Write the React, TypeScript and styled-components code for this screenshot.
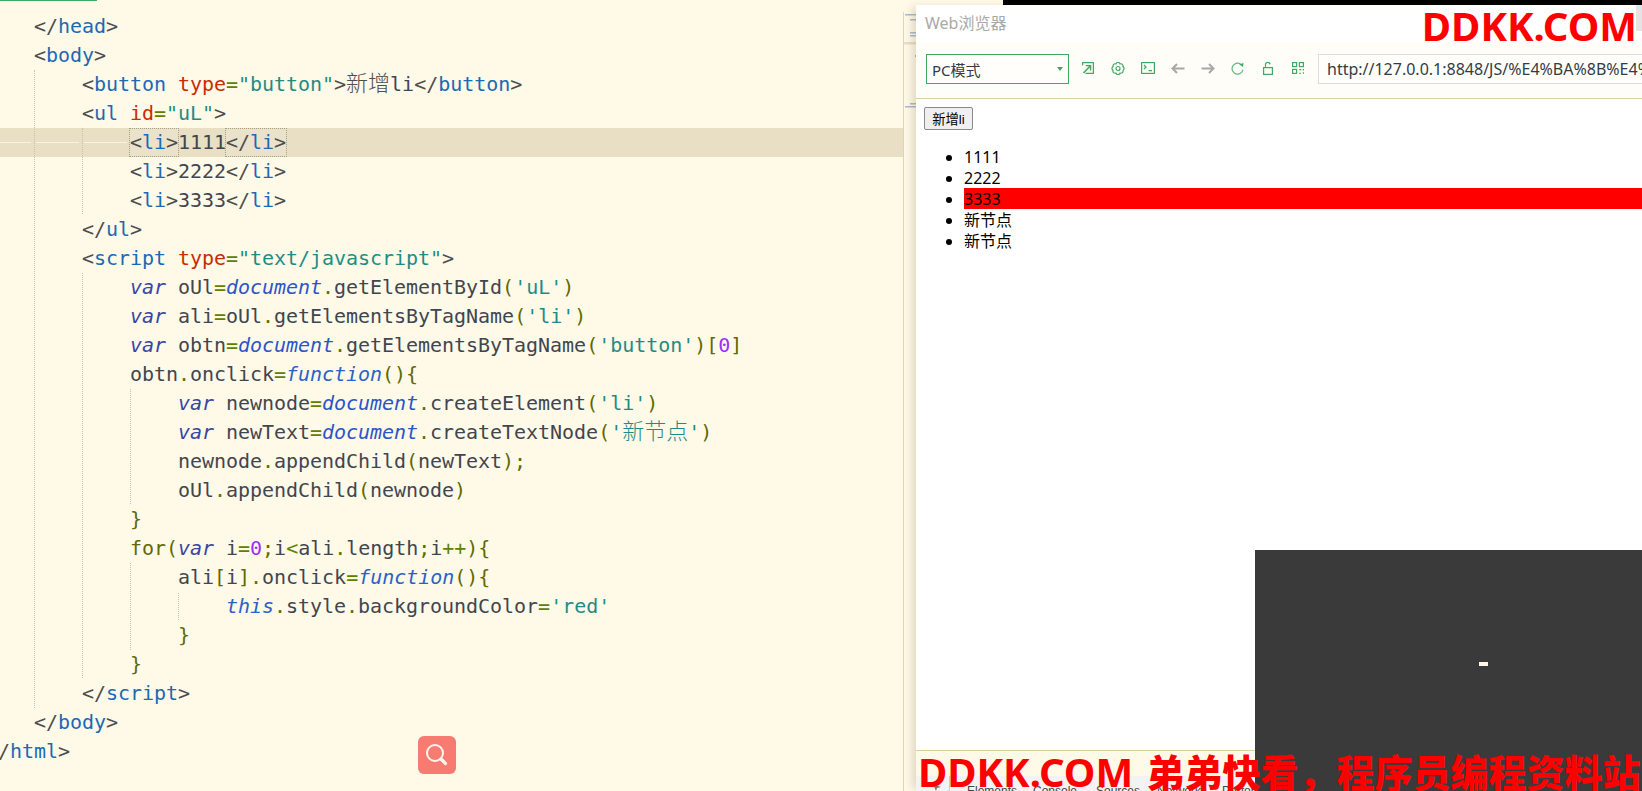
import React from "react";
import styled, { createGlobalStyle } from "styled-components";

const Global = createGlobalStyle`
  html, body { margin: 0; padding: 0; width: 1642px; height: 791px; overflow: hidden; background: #fff9e8; }
`;

const Screen = styled.div`
  position: relative; display: flex; width: 1642px; height: 791px; overflow: hidden; background: #fff9e8;
`;
const Editor = styled.div`
  position: relative; flex: none; width: 903px; height: 791px; overflow: hidden;
  box-sizing: border-box; padding-top: 12px; background: #fff9e8;
`;
const ProgressLine = styled.div`
  position: absolute; left: 0; top: 0; width: 97px; height: 1px; background: #3cab65;
`;
const Line = styled.div<{ $active?: boolean }>`
  position: relative; height: 29px; line-height: 29px; margin-left: -14px; white-space: pre;
  font-family: "DejaVu Sans Mono", "Liberation Mono", monospace; font-size: 20px; letter-spacing: -0.04px; color: #404040;
  background: ${(p) => (p.$active ? "#e8dfc4" : "transparent")};
`;
const colors: Record<string, string> = {
  p: "#4d4d4d", tag: "#1c69b5", attr: "#c92c00", str: "#1e8c86", txt: "#3f4650",
  kw: "#3a45a5", obj: "#2b55c8", fn: "#2b62c8", op: "#5f8000", par: "#5f6a00", num: "#9b30ff", dot: "#5f7000",
};
const Tok = styled.span<{ $k: string }>`
  color: ${(p) => colors[p.$k]};
  font-style: ${(p) => (["kw", "obj", "fn"].includes(p.$k) ? "italic" : "normal")};
`;
const Han = styled.span<{ $k: string }>`
  color: ${(p) => colors[p.$k]};
  font-family: "Noto Sans CJK SC", sans-serif; font-size: 22px; font-weight: 300; letter-spacing: 0;
  line-height: 20px;
`;
const Match = styled.span`
  outline: 1px dotted #a89f80; outline-offset: 0; background: #eae2ca; display: inline-block; height: 27px; line-height: 27px; vertical-align: top; margin-top: 1px;
`;
const WsDash = styled.i<{ $x: number; $w: number }>`
  position: absolute; top: 14px; height: 1px; left: ${(p) => p.$x + 14}px; width: ${(p) => p.$w}px; background: #f8f3e2;
`;
const Guide = styled.div<{ $x: number; $y: number; $h: number }>`
  position: absolute; left: ${(p) => p.$x}px; top: ${(p) => p.$y}px; height: ${(p) => p.$h}px;
  border-left: 1px dotted #c8c3ae; width: 0;
`;
const Fab = styled.div`
  position: absolute; left: 418px; top: 736px; width: 38px; height: 38px; border-radius: 6px; background: #f77b70;
  display: flex; align-items: center; justify-content: center;
`;
const Gutter = styled.div`
  flex: none; width: 13px; height: 791px; box-sizing: border-box; background: #fff9e8; border-left: 1px solid #e0d6ae; margin-top: 12px;
`;
const Right = styled.div`
  flex: 1; min-width: 0; display: flex; flex-direction: column; height: 791px;
`;
const TopStrip = styled.div`
  flex: none; height: 5px; display: flex;
`;
const TopGap = styled.div`
  width: 87px; background: #fff9e8;
`;
const TopBlack = styled.div`
  flex: 1; background: #000;
`;
const Panel = styled.div`
  flex: 1; min-width: 0; min-height: 0; display: flex; flex-direction: column; background: #fff; overflow: hidden;
  position: relative;
`;
const PanelShadow = styled.div`
  flex: 1; min-height: 0; display: flex; box-shadow: -6px 0 8px -2px rgba(90, 80, 40, 0.18);
`;
const Title = styled.div`
  flex: none; height: 37px; display: flex; align-items: center; justify-content: space-between; box-sizing: border-box; padding: 0 0 4px 9px; background: #fff;
  font-family: "Noto Sans", "Noto Sans CJK SC", sans-serif; font-size: 16px; color: #a9a9a9;
`;
const TitleBtn = styled.div`
  width: 6px; height: 26px; background: #e4e4e4; margin-top: -8px;
`;
const Toolbar = styled.div`
  flex: none; height: 57px; box-sizing: border-box; display: flex; align-items: center; padding: 0 0 2px 10px; background: #fffdf8; border-bottom: 1px solid #dccfa0;
`;
const Select = styled.div`
  flex: none; position: relative; width: 143px; height: 30px; box-sizing: border-box; border: 1px solid #3fa964; background: #fffefb; display: flex; align-items: center; padding-left: 5px;
  font-family: "Noto Sans", "Noto Sans CJK SC", sans-serif; font-size: 15px; color: #333c45;
`;
const Caret = styled.i`
  position: absolute; right: 5px; top: 12px; width: 0; height: 0; border-left: 3px solid transparent; border-right: 3px solid transparent; border-top: 4px solid #3fa964;
`;
const Icons = styled.div`
  flex: none; display: flex; margin: 0 5.5px 0 3.5px;
`;
const IconSlot = styled.div`
  width: 30px; height: 30px; display: flex; align-items: center; justify-content: center; margin-top: -2px;
`;
const Url = styled.div`
  flex: none; width: 420px; height: 30px; box-sizing: border-box; border: 1px solid #dcdcdc; border-right: 0; background: #fffefb; padding-left: 8px; line-height: 28px; white-space: pre;
  font-family: "Noto Sans", sans-serif; font-size: 16px; color: #333c45;
`;
const Page = styled.div`
  flex: 1; min-height: 0; box-sizing: border-box; padding: 8px 0 0 8px; background: #fff; overflow: hidden;
  font-family: "Noto Sans", "Noto Sans CJK SC", sans-serif; font-size: 16px; color: #000;
`;
const PageBtn = styled.div`
  width: 49px; height: 23px; box-sizing: border-box; display: flex; align-items: center; justify-content: center;
  border: 1px solid #8a8a8a; border-radius: 2px; background: #efefef;
  font-family: "Liberation Sans", "Noto Sans CJK SC", sans-serif; font-size: 13.33px; color: #000;
`;
const List = styled.ul`
  margin: 16px 0 0; padding: 0 0 0 40px;
`;
const Item = styled.li<{ $red?: boolean }>`
  height: 21px; line-height: 22px; background: ${(p) => (p.$red ? "#ff0000" : "transparent")};
`;
const Band = styled.div`
  flex: none; height: 25px; background: #fff9e8; border-top: 1px solid #dccfa0;
`;
const DevTools = styled.div`
  flex: none; height: 15px; background: #f3f3f3; display: flex; align-items: flex-start; overflow: hidden;
  font-family: "Liberation Sans", sans-serif; font-size: 12px; color: #444; line-height: 14px;
`;
const DevSpacer = styled.div`
  flex: none; height: 15px; width: 26px; margin-left: 8px; margin-right: 17px; border-right: 1px solid #ccc; box-sizing: border-box; display: flex; align-items: flex-end; padding-left: 8px;
`;
const DevTab = styled.span<{ $w: number }>`
  flex: none; width: ${(p) => p.$w}px; padding-top: 8px;
`;
const Dark = styled.div`
  position: absolute; left: 1255px; top: 550px; right: 0; bottom: 0; background: #3a3a3a;
`;
const Dash = styled.div`
  position: absolute; left: 224px; top: 112px; width: 9px; height: 4px; background: #fff6e6;
`;
const Watermark = styled.div<{ $top: boolean }>`
  position: absolute; white-space: pre; color: #ff0000; font-weight: 700; line-height: 54px;
  font-family: "Noto Sans", "Noto Sans CJK SC", sans-serif; font-size: 40px;
  ${(p) => (p.$top ? "right: 5px; top: -1px;" : "left: 918px; top: 745px;")}
`;
const WmHan = styled.span`
  font-size: 38px; font-weight: 900; margin-left: 3px;
`;

type T = [string, string];
const tag = (s: string): T[] => [["p", "<"], ["tag", s], ["p", ">"]];
const ctag = (s: string): T[] => [["p", "</"], ["tag", s], ["p", ">"]];

const lines: T[][] = [
  [["p", "    "], ...ctag("head")],
  [["p", "    "], ...tag("body")],
  [["p", "        <"], ["tag", "button "], ["attr", "type"], ["op", "="], ["str", '"button"'], ["p", ">"], ["H", "新增"], ["txt", "li"], ...ctag("button")],
  [["p", "        <"], ["tag", "ul "], ["attr", "id"], ["op", "="], ["str", '"uL"'], ["p", ">"]],
  [],
  [["p", "            "], ...tag("li"), ["txt", "2222"], ...ctag("li")],
  [["p", "            "], ...tag("li"), ["txt", "3333"], ...ctag("li")],
  [["p", "        "], ...ctag("ul")],
  [["p", "        <"], ["tag", "script "], ["attr", "type"], ["op", "="], ["str", '"text/javascript"'], ["p", ">"]],
  [["p", "            "], ["kw", "var"], ["txt", " oUl"], ["op", "="], ["obj", "document"], ["dot", "."], ["txt", "getElementById"], ["par", "("], ["str", "'uL'"], ["par", ")"]],
  [["p", "            "], ["kw", "var"], ["txt", " ali"], ["op", "="], ["txt", "oUl"], ["dot", "."], ["txt", "getElementsByTagName"], ["par", "("], ["str", "'li'"], ["par", ")"]],
  [["p", "            "], ["kw", "var"], ["txt", " obtn"], ["op", "="], ["obj", "document"], ["dot", "."], ["txt", "getElementsByTagName"], ["par", "("], ["str", "'button'"], ["par", ")["], ["num", "0"], ["par", "]"]],
  [["p", "            "], ["txt", "obtn"], ["dot", "."], ["txt", "onclick"], ["op", "="], ["fn", "function"], ["par", "(){"]],
  [["p", "                "], ["kw", "var"], ["txt", " newnode"], ["op", "="], ["obj", "document"], ["dot", "."], ["txt", "createElement"], ["par", "("], ["str", "'li'"], ["par", ")"]],
  [["p", "                "], ["kw", "var"], ["txt", " newText"], ["op", "="], ["obj", "document"], ["dot", "."], ["txt", "createTextNode"], ["par", "("], ["str", "'"], ["HS", "新节点"], ["str", "'"], ["par", ")"]],
  [["p", "                "], ["txt", "newnode"], ["dot", "."], ["txt", "appendChild"], ["par", "("], ["txt", "newText"], ["par", ");"]],
  [["p", "                "], ["txt", "oUl"], ["dot", "."], ["txt", "appendChild"], ["par", "("], ["txt", "newnode"], ["par", ")"]],
  [["p", "            "], ["par", "}"]],
  [["p", "            "], ["par", "for("], ["kw", "var"], ["txt", " i"], ["op", "="], ["num", "0"], ["par", ";"], ["txt", "i"], ["op", "<"], ["txt", "ali"], ["dot", "."], ["txt", "length"], ["par", ";"], ["txt", "i"], ["op", "++"], ["par", "){"]],
  [["p", "                "], ["txt", "ali"], ["par", "["], ["txt", "i"], ["par", "]"], ["dot", "."], ["txt", "onclick"], ["op", "="], ["fn", "function"], ["par", "(){"]],
  [["p", "                    "], ["fn", "this"], ["dot", "."], ["txt", "style"], ["dot", "."], ["txt", "backgroundColor"], ["op", "="], ["str", "'red'"]],
  [["p", "                "], ["par", "}"]],
  [["p", "            "], ["par", "}"]],
  [["p", "        "], ...ctag("script")],
  [["p", "    "], ...ctag("body")],
  ctag("html"),
];

const guides = [
  { x: 34, y: 70, h: 638 }, { x: 82, y: 128, h: 86 }, { x: 82, y: 273, h: 405 },
  { x: 130, y: 389, h: 115 }, { x: 130, y: 563, h: 87 }, { x: 178, y: 593, h: 27 },
];

const stroke = { fill: "none", stroke: "#3fa964", strokeWidth: 1.2 };
const gray = { fill: "none", stroke: "#a8a8a8", strokeWidth: 2 };

const gearPath = (() => {
  const cx = 7, cy = 6.5, r = 4.9;
  const pts = Array.from({ length: 8 }, (_, i) => {
    const a = (i * Math.PI) / 4 + Math.PI / 8;
    return [cx + r * 1.08 * Math.cos(a), cy + r * Math.sin(a)];
  });
  return pts.map((p, i) => `${i === 0 ? "M" : "A2.1 2.1 0 0 1"} ${p[0].toFixed(2)} ${p[1].toFixed(2)}`).join(" ")
    + ` A2.1 2.1 0 0 1 ${pts[0][0].toFixed(2)} ${pts[0][1].toFixed(2)}`;
})();

const toolIcons = [
  <svg key="a" width="12" height="12" viewBox="0 0 12 12" {...stroke}><path d="M.6 3.5V.6h10.8v10.8H3.5" /><path d="M1.5 11L8 4.2" strokeWidth="1.6" /><path d="M3.8 3.6h4.8v4.8" strokeWidth="1.4" /></svg>,
  <svg key="b" width="14" height="13" viewBox="0 0 14 13" {...stroke}><path d={gearPath} /><circle cx="7" cy="6.5" r="2" /></svg>,
  <svg key="c" width="14" height="12" viewBox="0 0 14 12" {...stroke}><rect x=".6" y=".6" width="12.8" height="10.8" /><path d="M3 3l2 2-2 2M7.5 8.7H11" /></svg>,
  <svg key="d" width="14" height="11" viewBox="0 0 14 11" {...gray}><path d="M13.5 5.5H1.5M6 1L1.5 5.5 6 10" /></svg>,
  <svg key="e" width="14" height="11" viewBox="0 0 14 11" {...gray}><path d="M.5 5.5h12M8 1l4.5 4.5L8 10" /></svg>,
  <svg key="f" width="13" height="13" viewBox="0 0 13 13" fill="none" stroke="#5fb985" strokeWidth="1.2"><path d="M12 7.6A5.5 5.5 0 1 1 9.6 2" /><path d="M8.2 2.6l4.2-1.6-.3 4z" fill="#3fa964" stroke="none" /></svg>,
  <svg key="g" width="10" height="13" viewBox="0 0 10 13" {...stroke}><rect x=".6" y="5.6" width="8.8" height="6.8" /><path d="M2.5 5.6V2.8a2.3 2.3 0 0 1 4.6-.4" /></svg>,
  <svg key="h" width="12" height="12" viewBox="0 0 12 12" {...stroke}><rect x=".6" y=".6" width="4" height="4" /><rect x="7.4" y=".6" width="4" height="4" /><rect x=".6" y="7.4" width="4" height="4" /><path d="M7.2 7.6h2M11.4 7v1.6M7.2 11.4h1.6M11.4 10.2v1.6" /></svg>,
];

function renderTokens(ts: T[]) {
  return ts.map(([k, s], i) =>
    k === "H" ? <Han key={i} $k="p">{s}</Han> : k === "HS" ? <Han key={i} $k="str">{s}</Han> : <Tok key={i} $k={k}>{s}</Tok>
  );
}

export default function App() {
  return (
    <Screen>
      <Global />
      <Editor>
        <ProgressLine />
        {lines.map((l, i) =>
          i === 4 ? (
            <Line key={i} $active>
              <WsDash $x={0} $w={31} /><WsDash $x={36} $w={43} /><WsDash $x={84} $w={43} />
              <Tok $k="p">{"            "}</Tok>
              <Match>{renderTokens(tag("li"))}</Match>
              <Tok $k="txt">1111</Tok>
              <Match>{renderTokens(ctag("li"))}</Match>
            </Line>
          ) : (
            <Line key={i}>{renderTokens(l)}</Line>
          )
        )}
        {guides.map((g, i) => <Guide key={i} $x={g.x} $y={g.y} $h={g.h} />)}
        <Fab>
          <svg width="24" height="24" viewBox="0 0 24 24" fill="none" stroke="#fff6ee" strokeWidth="2">
            <circle cx="10" cy="10" r="8" />
            <path d="M16 16l4.5 4.5" strokeWidth="3.2" strokeLinecap="round" />
          </svg>
        </Fab>
      </Editor>
      <Gutter>
        <svg width="12" height="100" viewBox="0 0 12 100">
          <g fill="#a9bccb">
            <rect x="1" y="2" width="11" height="1.5" />
            <rect x="6" y="7" width="6" height="1.5" />
            <rect x="6" y="20" width="6" height="1.5" />
            <rect x="6" y="23" width="6" height="1.5" />
            <rect x="11" y="43" width="1" height="2" />
            <rect x="1" y="94" width="11" height="1.5" />
            <rect x="6" y="91" width="6" height="1.5" />
          </g>
          <rect x="0" y="30" width="12" height="2.5" fill="#e8dfc4" />
        </svg>
      </Gutter>
      <Right>
        <TopStrip><TopGap /><TopBlack /></TopStrip>
        <PanelShadow>
          <Panel>
            <Title>Web浏览器<TitleBtn /></Title>
            <Toolbar>
              <Select>PC模式<Caret /></Select>
              <Icons>{toolIcons.map((ic, i) => <IconSlot key={i}>{ic}</IconSlot>)}</Icons>
              <Url>http://127.0.0.1:8848/JS/%E4%BA%8B%E4%BB%B6.html</Url>
            </Toolbar>
            <Page>
              <PageBtn>新增li</PageBtn>
              <List>
                <Item>1111</Item>
                <Item>2222</Item>
                <Item $red>3333</Item>
                <Item>新节点</Item>
                <Item>新节点</Item>
              </List>
            </Page>
            <Band />
            <DevTools>
              <DevSpacer>
                <svg width="10" height="7" viewBox="0 0 10 7"><path d="M1 0l3 7 1-3 4-1z" fill="#777" /></svg>
              </DevSpacer>
              <DevTab $w={66}>Elements</DevTab>
              <DevTab $w={63}>Console</DevTab>
              <DevTab $w={61}>Sources</DevTab>
              <DevTab $w={65}>Network</DevTab>
              <DevTab $w={80}>Performance</DevTab>
            </DevTools>
          </Panel>
        </PanelShadow>
      </Right>
      <Dark><Dash /></Dark>
      <Watermark $top>DDKK.COM</Watermark>
      <Watermark $top={false}>DDKK.COM <WmHan>弟弟快看，程序员编程资料站</WmHan></Watermark>
    </Screen>
  );
}
